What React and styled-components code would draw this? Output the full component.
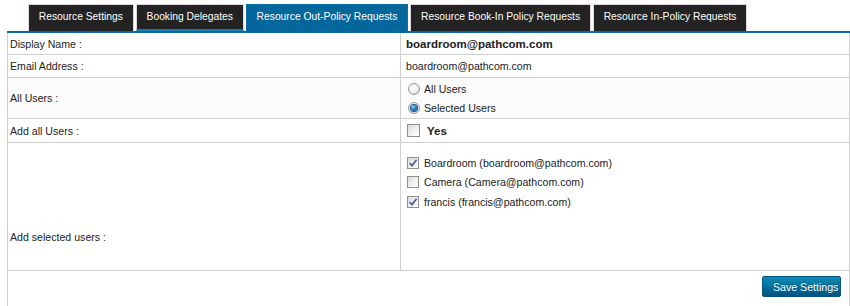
import React from "react";
import styled, { createGlobalStyle } from "styled-components";

const Global = createGlobalStyle`
  html, body { margin: 0; padding: 0; background: #fff; }
  body { font-family: "Liberation Sans", Arial, sans-serif; color: #222; }
`;

const Page = styled.div`
  padding-left: 7px;
  width: 843px;
`;

const TabBar = styled.div`
  display: flex;
  padding: 4px 0 0 21px;
  height: 27px;
  border-bottom: 2px solid #0b6a9c;
`;

const Tab = styled.div`
  box-sizing: border-box;
  height: 27px;
  margin-right: 2px;
  padding: 5px 9.8px 0;
  font-size: 10.3px;
  line-height: 14px;
  color: #fff;
  white-space: nowrap;
  background: ${(p) => (p.$active ? "#03679b" : "#232323")};
  border: 1px solid ${(p) => (p.$active ? "#0a6fa3" : "#e2d6e2")};
  border-bottom: ${(p) => (p.$hover ? "2px solid #1a7ab0" : "0")};
`;

const Form = styled.div`
  border-left: 1px solid #cfcfcf;
  border-right: 1px solid #cfcfcf;
`;

const Row = styled.div`
  display: grid;
  grid-template-columns: 393px 1fr;
  height: ${(p) => p.$h}px;
  border-bottom: ${(p) => (p.$last ? "0" : "1px solid #cfcfcf")};
  background: ${(p) => (p.$shade ? "#fbfbfb" : "#fff")};
  box-sizing: content-box;
`;

const Label = styled.div`
  display: flex;
  align-items: ${(p) => (p.$bottom ? "flex-end" : "center")};
  padding-left: 2px;
  padding-bottom: ${(p) => (p.$bottom ? "27px" : "0")};
  font-size: 10.6px;
  border-right: 1px solid #cfcfcf;
`;

const Value = styled.div`
  display: flex;
  flex-direction: column;
  justify-content: ${(p) => (p.$top ? "flex-start" : "center")};
  padding: ${(p) => (p.$top ? "10px 0 0 5px" : "0 0 0 5px")};
  font-size: ${(p) => (p.$bold ? "11.5px" : "10.6px")};
  font-weight: ${(p) => (p.$bold ? "bold" : "normal")};
`;

const Option = styled.label`
  display: flex;
  align-items: center;
  height: ${(p) => p.$h || 19}px;
  gap: ${(p) => p.$gap || 4}px;
  font-size: ${(p) => (p.$bold ? "11.5px" : "10.6px")};
  font-weight: ${(p) => (p.$bold ? "bold" : "normal")};
`;

const RadioDot = styled.span`
  box-sizing: border-box;
  width: 12px;
  height: 12px;
  margin-left: 2px;
  border-radius: 50%;
  border: 1px solid #9a9a9a;
  background: radial-gradient(circle at 40% 35%, #ffffff 0%, #f0f0f0 45%, #cfcfcf 100%);
  display: flex;
  align-items: center;
  justify-content: center;
  &::after {
    content: "";
    display: ${(p) => (p.$on ? "block" : "none")};
    width: 6px;
    height: 6px;
    border-radius: 50%;
    background: radial-gradient(circle at 35% 30%, #8fd0ff 0%, #1a7fc8 50%, #063d6e 100%);
    box-shadow: 0 0 0 1px #1b4c78;
  }
`;

const Box = styled.span`
  box-sizing: border-box;
  width: ${(p) => p.$size || 12}px;
  height: ${(p) => p.$size || 12}px;
  margin-left: 1px;
  border: 1px solid #8e8f8f;
  background: linear-gradient(135deg, #d8d8d8 0%, #f4f4f4 60%, #ffffff 100%);
  display: flex;
  align-items: center;
  justify-content: center;
`;

const Check = () => (
  <svg width="10" height="10" viewBox="0 0 10 10">
    <path d="M1.6 5.2 L4 7.6 L8.6 1.8" fill="none" stroke="#4a5d9e" strokeWidth="1.7" />
  </svg>
);

const Actions = styled.div`
  grid-column: 1 / span 2;
  display: flex;
  justify-content: flex-end;
  align-items: flex-start;
  padding: 5px 8px 0 0;
`;

const SaveButton = styled.button`
  box-sizing: border-box;
  width: 79px;
  height: 21px;
  padding: 0 0 0 10px;
  text-align: left;
  font-family: "Liberation Sans", Arial, sans-serif;
  font-size: 10.6px;
  color: #fff;
  text-shadow: 0 -1px 0 rgba(0, 0, 0, 0.3);
  border: 1px solid #04557f;
  border-radius: 2px;
  background: linear-gradient(to bottom, #0c8cb6 0%, #03719f 50%, #02527f 100%);
  cursor: pointer;
`;

const tabs = [
  { t: "Resource Settings" },
  { t: "Booking Delegates", hover: true },
  { t: "Resource Out-Policy Requests", active: true },
  { t: "Resource Book-In Policy Requests" },
  { t: "Resource In-Policy Requests" },
];

const users = [
  { name: "Boardroom (boardroom@pathcom.com)", on: true },
  { name: "Camera (Camera@pathcom.com)", on: false },
  { name: "francis (francis@pathcom.com)", on: true },
];

export default function App() {
  return (
    <Page>
      <Global />
      <TabBar>
        {tabs.map((tab) => (
          <Tab key={tab.t} $active={tab.active} $hover={tab.hover}>
            {tab.t}
          </Tab>
        ))}
      </TabBar>
      <Form>
        <Row $h={21}>
          <Label>Display Name :</Label>
          <Value $bold>boardroom@pathcom.com</Value>
        </Row>
        <Row $h={22}>
          <Label>Email Address :</Label>
          <Value>boardroom@pathcom.com</Value>
        </Row>
        <Row $h={40} $shade>
          <Label>All Users :</Label>
          <Value>
            <Option $h={19}>
              <RadioDot />
              All Users
            </Option>
            <Option $h={19}>
              <RadioDot $on />
              Selected Users
            </Option>
          </Value>
        </Row>
        <Row $h={23}>
          <Label>Add all Users :</Label>
          <Value>
            <Option $bold $gap={7} $h={23}>
              <Box $size={13} />
              Yes
            </Option>
          </Value>
        </Row>
        <Row $h={127}>
          <Label $bottom>Add selected users :</Label>
          <Value $top>
            {users.map((u) => (
              <Option key={u.name} $gap={5} $h={19.5}>
                <Box>{u.on && <Check />}</Box>
                {u.name}
              </Option>
            ))}
          </Value>
        </Row>
        <Row $h={36} $last>
          <Actions>
            <SaveButton>Save Settings</SaveButton>
          </Actions>
        </Row>
      </Form>
    </Page>
  );
}
